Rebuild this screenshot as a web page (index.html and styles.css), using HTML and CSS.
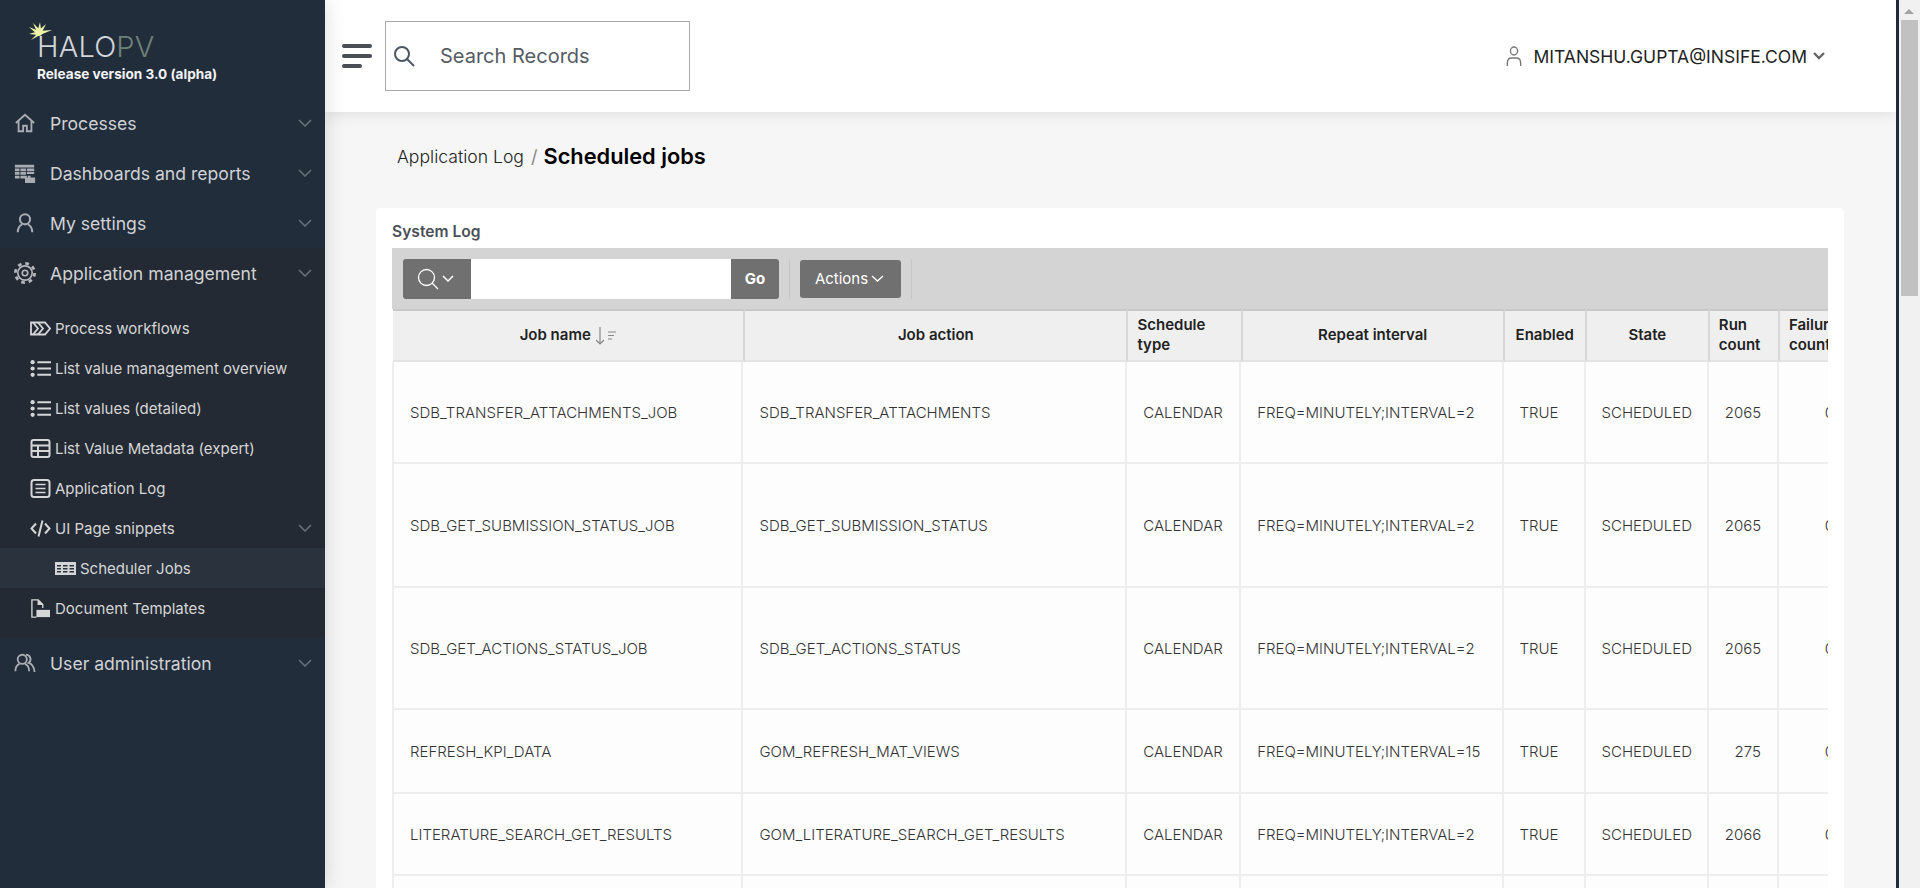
FILE: index.html
```html
<!DOCTYPE html>
<html lang="en">
<head>
	<meta charset="UTF-8">
	<title>Scheduled jobs</title>
	<link rel="stylesheet" href="styles.css">
</head>
<body>
	<aside class="sidebar">
		<div class="logo">
			<div class="logo-mark">
				<svg class="logo-star" width="24" height="20" viewBox="0 0 24 20" fill="#eef2a6">
					<circle cx="10" cy="11" r="3"/>
					<polygon points="8,11 11,0 12.500,11"/>
					<polygon points="8,10 4,1 12,9"/>
					<polygon points="9,9 17,2 12,12"/>
					<polygon points="9,9 23,8 11,13"/>
					<polygon points="10,9 0,5 9,13"/>
					<polygon points="10,9 0,12 9,13"/>
					<polygon points="10,10 2,18 11,13"/>
				</svg>
				<span class="logo-name">HALO<span class="logo-pv">PV</span></span>
			</div>
			<div class="release">Release version 3.0 (alpha)</div>
		</div>
		<nav>
			<a class="nav-item">
				<svg class="nav-icon" viewBox="0 0 24 24" fill="none" stroke="#a9adb2" stroke-width="2"><path d="M2 12 12 3l10 9M5 10v11h5v-6h4v6h5V10"/></svg>
				<span>Processes</span>
				<svg class="chev" viewBox="0 0 14 8"><path d="M1 1l6 6 6-6"/></svg>
			</a>
			<a class="nav-item">
				<svg class="nav-icon" viewBox="0 0 24 24" fill="#a9adb2"><path d="M1 3h21v3H1zM1 7h5v3H1zM7 7h6v3H7zM14 7h8v3h-8zM1 11h5v3H1zM7 11h6v3H7zM14 11h8v2h-8zM1 15h5v3H1zM7 15h7v3H7z"/><path d="M12 17h11v6H12zM15 15h3v3h-3z"/></svg>
				<span>Dashboards and reports</span>
				<svg class="chev" viewBox="0 0 14 8"><path d="M1 1l6 6 6-6"/></svg>
			</a>
			<a class="nav-item">
				<svg class="nav-icon" viewBox="0 0 24 24" fill="none" stroke="#a9adb2" stroke-width="2.2"><circle cx="12" cy="8" r="5.5"/><path d="M4 22c0-5 3-8 5-8.500M20 22c0-5-3-8-5-8.500"/></svg>
				<span>My settings</span>
				<svg class="chev" viewBox="0 0 14 8"><path d="M1 1l6 6 6-6"/></svg>
			</a>
			<div class="nav-group">
				<a class="nav-item">
					<svg class="nav-icon" viewBox="0 0 24 24" fill="none" stroke="#b4b7bb"><circle cx="12" cy="12" r="10.500" stroke-width="3" stroke-dasharray="4 4.250"/><circle cx="12" cy="12" r="7.800" stroke-width="1.800"/><circle cx="12" cy="12" r="3" stroke-width="1.800"/></svg>
					<span>Application management</span>
					<svg class="chev" viewBox="0 0 14 8"><path d="M1 1l6 6 6-6"/></svg>
				</a>
				<div class="sub-list">
					<a class="sub-item">
						<svg class="sub-icon" viewBox="0 0 21 14" fill="none" stroke="#d4d6d8" stroke-width="1.800"><path d="M1 1h14l5 6-5 6H1z"/><path d="M3 1l5 6-5 6M8 1l5 6-5 6"/></svg>
						<span>Process workflows</span>
					</a>
					<a class="sub-item">
						<svg class="sub-icon" viewBox="0 0 20 16" fill="#d4d6d8"><circle cx="2.500" cy="2" r="2"/><circle cx="2.500" cy="8" r="2"/><circle cx="2.500" cy="14" r="2"/><path d="M7 1h13v2H7zM7 7h13v2H7zM7 13h13v2H7z"/></svg>
						<span>List value management overview</span>
					</a>
					<a class="sub-item">
						<svg class="sub-icon" viewBox="0 0 20 16" fill="#d4d6d8"><circle cx="2.500" cy="2" r="2"/><circle cx="2.500" cy="8" r="2"/><circle cx="2.500" cy="14" r="2"/><path d="M7 1h13v2H7zM7 7h13v2H7zM7 13h13v2H7z"/></svg>
						<span>List values (detailed)</span>
					</a>
					<a class="sub-item">
						<svg class="sub-icon" viewBox="0 0 20 19" fill="none" stroke="#d4d6d8" stroke-width="2"><rect x="1" y="1" width="18" height="17" rx="2"/><path d="M1 6.500h18M1 12h18M7.500 6v12"/></svg>
						<span>List Value Metadata (expert)</span>
					</a>
					<a class="sub-item">
						<svg class="sub-icon" viewBox="0 0 20 19" fill="none" stroke="#d4d6d8" stroke-width="2"><rect x="1" y="1" width="18" height="17" rx="2.500"/><path d="M5 5.500h10M5 9.500h10M5 13.500h10" stroke-width="1.500"/></svg>
						<span>Application Log</span>
					</a>
					<a class="sub-item">
						<svg class="sub-icon" viewBox="0 0 21 18" fill="none" stroke="#d4d6d8" stroke-width="2"><path d="M6 4 1.500 9 6 14M15 4l4.500 5-4.500 5M12.500 1 8.500 17"/></svg>
						<span>UI Page snippets</span>
						<svg class="chev" viewBox="0 0 14 8"><path d="M1 1l6 6 6-6"/></svg>
					</a>
					<a class="sub-item is-current">
						<svg class="sub-icon" viewBox="0 0 21 13" fill="#d4d6d8"><path d="M0 0h21v13H0z"/><path fill="#2a333d" d="M2 3h4v1.500H2zM8 3h4.500v1.500H8zM14.500 3H19v1.500h-4.500zM2 6h4v1.500H2zM8 6h4.500v1.500H8zM14.500 6H19v1.500h-4.500zM2 9h4v1.500H2zM8 9h4.500v1.500H8zM14.500 9H19v1.500h-4.500z"/></svg>
						<span>Scheduler Jobs</span>
					</a>
					<a class="sub-item">
						<svg class="sub-icon" viewBox="0 0 21 21" fill="none" stroke="#d4d6d8" stroke-width="1.500"><path d="M6 20H1V1h7l5 5v4"/><path d="M8 1v5h5" fill="#d4d6d8"/><path d="M6 12h15v8H6z" fill="#d4d6d8" stroke="none"/></svg>
						<span>Document Templates</span>
					</a>
				</div>
			</div>
			<a class="nav-item">
				<svg class="nav-icon" viewBox="0 0 24 24" fill="none" stroke="#a9adb2" stroke-width="2"><circle cx="9" cy="8" r="5"/><path d="M1.500 21c0-4 2-7 4.500-8M16.500 21c0-4-2-7-4.500-8"/><path d="M13 2.800a5 5 0 0 1 3 9c3 1 6 4 6.500 10"/></svg>
				<span>User administration</span>
				<svg class="chev" viewBox="0 0 14 8"><path d="M1 1l6 6 6-6"/></svg>
			</a>
		</nav>
	</aside>

	<div class="page">
		<header class="topbar">
			<div class="burger"><i></i><i></i><i class="short"></i></div>
			<div class="search">
				<svg width="22" height="22" viewBox="0 0 22 22" fill="none" stroke="#4b5563" stroke-width="2"><circle cx="9" cy="9" r="7"/><path d="M14 14l7 7"/></svg>
				<span>Search Records</span>
			</div>
			<div class="user">
				<svg width="16" height="20" viewBox="0 0 18 20" fill="none" stroke="#777" stroke-width="1.500" preserveAspectRatio="none"><circle cx="9" cy="5" r="4"/><path d="M1.500 20v-3c0-3 2-5 5-5h5c3 0 5 2 5 5v3"/></svg>
				<span>MITANSHU.GUPTA@INSIFE.COM</span>
				<svg width="12" height="8" viewBox="0 0 12 8" fill="none" stroke="#666" stroke-width="2.400"><path d="M1 1l5 5 5-5"/></svg>
			</div>
		</header>

		<main class="content">
			<div class="crumbs">
				<span class="crumb">Application Log</span>
				<span class="slash">/</span>
				<span class="crumb-now">Scheduled jobs</span>
			</div>

			<section class="card">
				<div class="card-title">System Log</div>
				<div class="grid-wrap">
					<div class="toolbar">
						<div class="search-group">
							<button class="tool-btn col-btn">
								<svg width="22" height="22" viewBox="0 0 22 22" fill="none" stroke="#fff" stroke-width="1.300"><circle cx="9.500" cy="9.500" r="8"/><path d="M15 15l6 6"/></svg>
								<svg width="12" height="7" viewBox="0 0 12 7" fill="none" stroke="#fff" stroke-width="1.500"><path d="M1 1l5 5 5-5"/></svg>
							</button>
							<div class="tool-input"></div>
							<button class="tool-btn go-btn">Go</button>
						</div>
						<div class="tool-sep"></div>
						<button class="tool-btn actions-btn">Actions
							<svg width="13" height="7" viewBox="0 0 13 7" fill="none" stroke="#fff" stroke-width="1.400"><path d="M1 1l5.500 5 5.500-5"/></svg>
						</button>
						<div class="tool-sep"></div>
					</div>

					<table class="head-table">
						<colgroup>
							<col class="c1"><col class="c2"><col class="c3"><col class="c4"><col class="c5"><col class="c6"><col class="c7"><col class="c8">
						</colgroup>
						<tr>
							<th>Job name
								<svg class="sort-icon" width="22" height="18" viewBox="0 0 22 18" fill="none" stroke="#888" stroke-width="1.200"><path d="M5 0v17M1 13l4 4 4-4M13 5h8M13 8.500h6M13 12h4"/></svg>
							</th>
							<th>Job action</th>
							<th class="left">Schedule type</th>
							<th>Repeat interval</th>
							<th>Enabled</th>
							<th>State</th>
							<th class="left">Run count</th>
							<th class="left">Failure count</th>
						</tr>
					</table>

					<table class="body-table">
						<colgroup>
							<col class="b1"><col class="c2"><col class="c3"><col class="c4"><col class="c5"><col class="c6"><col class="c7"><col class="c8">
						</colgroup>
						<tr>
							<td>SDB_TRANSFER_ATTACHMENTS_JOB</td>
							<td>SDB_TRANSFER_ATTACHMENTS</td>
							<td class="mid">CALENDAR</td>
							<td>FREQ=MINUTELY;INTERVAL=2</td>
							<td>TRUE</td>
							<td class="mid">SCHEDULED</td>
							<td class="num">2065</td>
							<td class="num">0</td>
						</tr>
						<tr>
							<td>SDB_GET_SUBMISSION_STATUS_JOB</td>
							<td>SDB_GET_SUBMISSION_STATUS</td>
							<td class="mid">CALENDAR</td>
							<td>FREQ=MINUTELY;INTERVAL=2</td>
							<td>TRUE</td>
							<td class="mid">SCHEDULED</td>
							<td class="num">2065</td>
							<td class="num">0</td>
						</tr>
						<tr>
							<td>SDB_GET_ACTIONS_STATUS_JOB</td>
							<td>SDB_GET_ACTIONS_STATUS</td>
							<td class="mid">CALENDAR</td>
							<td>FREQ=MINUTELY;INTERVAL=2</td>
							<td>TRUE</td>
							<td class="mid">SCHEDULED</td>
							<td class="num">2065</td>
							<td class="num">0</td>
						</tr>
						<tr>
							<td>REFRESH_KPI_DATA</td>
							<td>GOM_REFRESH_MAT_VIEWS</td>
							<td class="mid">CALENDAR</td>
							<td>FREQ=MINUTELY;INTERVAL=15</td>
							<td>TRUE</td>
							<td class="mid">SCHEDULED</td>
							<td class="num">275</td>
							<td class="num">0</td>
						</tr>
						<tr>
							<td>LITERATURE_SEARCH_GET_RESULTS</td>
							<td>GOM_LITERATURE_SEARCH_GET_RESULTS</td>
							<td class="mid">CALENDAR</td>
							<td>FREQ=MINUTELY;INTERVAL=2</td>
							<td>TRUE</td>
							<td class="mid">SCHEDULED</td>
							<td class="num">2066</td>
							<td class="num">0</td>
						</tr>
						<tr>
							<td></td><td></td><td></td><td></td><td></td><td></td><td></td><td></td>
						</tr>
					</table>
				</div>
			</section>
		</main>
	</div>

	<div class="scrollbar">
		<div class="scroll-up"></div>
		<div class="scroll-thumb"></div>
	</div>
</body>
</html>
```

FILE: styles.css
```css
* {
	box-sizing: border-box;
}
html, body {
	height: 888px;
	margin: 0;
	overflow: hidden;
}
body {
	display: flex;
	background: #222d3b;
	font-family: Inter, "Noto Sans", sans-serif;
	color: #333;
}
button {
	font-family: inherit;
	border: 0;
}

/* sidebar */
.sidebar {
	width: 325px;
	flex: none;
	background: #222d3b;
	color: #d4d6d8;
	position: relative;
	z-index: 2;
	box-shadow: 0 0 20px rgba(0, 0, 0, .15);
}
.logo {
	height: 98px;
	padding: 22px 0 0 29px;
}
.logo-mark {
	position: relative;
	height: 37px;
}
.logo-star {
	position: absolute;
	left: 0;
	top: 0;
}
.logo-name {
	position: absolute;
	left: 8px;
	top: 9px;
	font-size: 29px;
	line-height: 32px;
	font-weight: 300;
	letter-spacing: .2px;
	color: #d2d6d8;
}
.logo-pv {
	color: #6f8079;
}
.release {
	margin: 7px 0 0 8px;
	font-size: 13.6px;
	line-height: 16px;
	font-weight: 700;
	color: #f2f3f4;
	white-space: nowrap;
}
.nav-item {
	display: flex;
	align-items: center;
	height: 50px;
	padding-left: 14px;
	font-size: 17.6px;
	color: #d0d2d5;
}
.nav-icon {
	width: 22px;
	height: 22px;
	margin-right: 14px;
	flex: none;
}
.chev {
	width: 14px;
	height: 8px;
	margin-left: auto;
	margin-right: 13px;
	fill: none;
	stroke: #69727c;
	stroke-width: 1.500;
	flex: none;
}
.nav-group {
	background: #242a33;
}
.sub-list {
	padding: 10px 0;
}
.sub-item {
	display: flex;
	align-items: center;
	height: 40px;
	padding-left: 30px;
	font-size: 15px;
	color: #d4d6d8;
}
.sub-icon {
	width: 21px;
	height: 19px;
	margin-right: 4px;
	flex: none;
}
.sub-item.is-current {
	padding-left: 55px;
	background: #2a333d;
}

/* page */
.page {
	width: 1571px;
	flex: none;
	display: flex;
	flex-direction: column;
	background: #f6f6f6;
}
.topbar {
	height: 112px;
	flex: none;
	display: flex;
	align-items: center;
	padding: 0 71px 0 17px;
	background: #fff;
	position: relative;
	z-index: 1;
	box-shadow: 0 0 16px rgba(0, 0, 0, .12);
}
.burger {
	width: 30px;
	margin-right: 13px;
	display: flex;
	flex-direction: column;
	gap: 6px;
}
.burger i {
	display: block;
	height: 4px;
	border-radius: 2px;
	background: #4a4f57;
}
.burger .short {
	width: 20px;
}
.search {
	width: 305px;
	height: 70px;
	display: flex;
	align-items: center;
	gap: 25px;
	padding-left: 7px;
	border: 1px solid #aaa;
	font-size: 20px;
	color: #555b64;
}
.user {
	margin-left: auto;
	display: flex;
	align-items: center;
	gap: 12px;
	font-size: 17.5px;
	color: #222;
}
.user svg:last-child {
	margin-left: -6px;
}
.content {
	flex: 1;
	padding: 30px 52px 0 51px;
	overflow: hidden;
}
.crumbs {
	display: flex;
	align-items: center;
	height: 28px;
	margin: 0 0 38px 21px;
}
.crumb {
	font-size: 17.6px;
	font-weight: 300;
	color: #222;
}
.slash {
	margin: 0 6px 0 7px;
	font-size: 18px;
	color: #888;
}
.crumb-now {
	font-size: 21.8px;
	font-weight: 600;
	color: #000;
}

/* report card */
.card {
	height: 700px;
	padding: 16px 16px 0;
	background: #fff;
	border-radius: 4px;
}
.card-title {
	height: 24px;
	font-size: 15.6px;
	line-height: 16px;
	font-weight: 600;
	color: #4a4f57;
}
.grid-wrap {
	overflow: hidden;
}
.toolbar {
	display: flex;
	align-items: center;
	height: 61px;
	padding-left: 11px;
	background: #d4d4d4;
}
.search-group {
	display: flex;
}
.tool-btn {
	display: flex;
	align-items: center;
	justify-content: center;
	background: #707070;
	color: #fff;
	font-size: 15px;
}
.col-btn {
	width: 68px;
	height: 40px;
	gap: 3px;
	padding: 0 4px 0 0;
	border-radius: 3px 0 0 3px;
}
.tool-input {
	width: 260px;
	background: #fff;
}
.go-btn {
	width: 48px;
	height: 40px;
	font-weight: 700;
	border-radius: 0 3px 3px 0;
}
.tool-sep {
	width: 1px;
	height: 40px;
	margin: 0 10px;
	background: #c6c6c6;
}
.actions-btn {
	width: 101px;
	height: 38px;
	gap: 3px;
	padding: 0 2px 0 0;
	border-radius: 3px;
}

/* two tables, header and rows are offset by a pixel or two */
.head-table, .body-table {
	table-layout: fixed;
	border-collapse: separate;
	border-spacing: 0;
	width: 1460px;
	font-size: 15px;
}
.head-table {
	margin-left: 1px;
}
.c1 { width: 352px; }
.b1 { width: 351px; }
.c2 { width: 383px; }
.c3 { width: 114px; }
.c4 { width: 262px; }
.c5 { width: 82px; }
.c6 { width: 123px; }
.c7 { width: 70px; }
.c8 { width: 73px; }
th {
	height: 53px;
	padding: 0 9px 1px;
	background: #efefef;
	border-top: 2px solid #c8c8c8;
	border-right: 2px solid #d8d8d8;
	border-bottom: 2px solid #e4e4e4;
	font-weight: 600;
	line-height: 20px;
	color: #222;
	white-space: normal;
}
th.left {
	text-align: left;
}
.sort-icon {
	vertical-align: middle;
}
td {
	padding: 0 16px;
	background: #fdfdfd;
	border-right: 2px solid #eee;
	border-bottom: 2px solid #eee;
	font-weight: 300;
	color: #333;
	white-space: nowrap;
}
td:first-child {
	border-left: 2px solid #eee;
}
td.mid {
	text-align: center;
}
td.num {
	text-align: right;
}
.body-table tr:nth-child(1) { height: 102px; }
.body-table tr:nth-child(2) { height: 124px; }
.body-table tr:nth-child(3) { height: 122px; }
.body-table tr:nth-child(4) { height: 84px; }
.body-table tr:nth-child(5) { height: 82px; }
.body-table tr:nth-child(6) { height: 82px; }

/* page scrollbar, painted because the real one isn't in the photo */
.scrollbar {
	width: 21px;
	margin-left: 3px;
	flex: none;
	background: #f1f1f1;
	padding-left: 2px;
	position: relative;
	z-index: 3;
}
.scroll-up {
	width: 0;
	height: 0;
	margin: 9px 0 6px 3px;
	border: 5px solid transparent;
	border-top: 0;
	border-bottom: 5px solid #a3a3a3;
}
.scroll-thumb {
	width: 17px;
	height: 276px;
	background: #c1c1c1;
}
```
